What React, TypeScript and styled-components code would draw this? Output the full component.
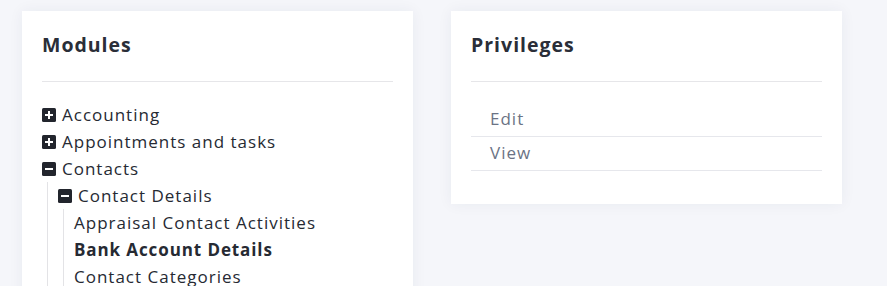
import React from "react";
import styled, { createGlobalStyle } from "styled-components";

const Global = createGlobalStyle`
  html, body { margin: 0; padding: 0; background: #f5f6fa; }
  body { font-family: "Open Sans", "DejaVu Sans", sans-serif; }
  * { box-sizing: border-box; }
`;

const Page = styled.div`
  display: flex;
  align-items: flex-start;
  gap: 38px;
  padding: 11px 22px 0 22px;
  height: 286px;
  overflow: hidden;
`;

const Card = styled.div<{ $fill?: boolean }>`
  width: 391px;
  background: #fff;
  box-shadow: 0 0 14px rgba(40, 50, 90, 0.06);
  padding: 20px 20px ${(p) => (p.$fill ? "0" : "33px")} 20px;
  ${(p) => (p.$fill ? "height: 400px;" : "")}
`;

const Title = styled.h3`
  margin: 0;
  font-size: 19.5px;
  font-weight: 700;
  letter-spacing: 1px;
  color: #2a2e38;
  line-height: 28px;
  padding-bottom: 22px;
  border-bottom: 1px solid #e6e6e9;
`;

const Tree = styled.ul`
  list-style: none;
  margin: 0;
  padding: 19px 0 0 0;
`;

const SubTree = styled.ul`
  list-style: none;
  margin: 0 0 0 5px;
  padding: 0 0 0 10px;
  border-left: 1px solid #e3e3e6;
`;

const Node = styled.li``;

const Label = styled.div<{ $bold?: boolean }>`
  display: flex;
  align-items: center;
  gap: 6px;
  height: 27px;
  font-size: 17px;
  letter-spacing: ${(p) => (p.$bold ? "0.9px" : "1px")};
  color: #262a33;
  font-weight: ${(p) => (p.$bold ? 700 : 400)};
  white-space: nowrap;
`;

const Toggle = styled.span`
  display: inline-flex;
  width: 14px;
  height: 14px;
  flex: none;
`;

const PrivList = styled.ul`
  list-style: none;
  margin: 0;
  padding: 21px 0 0 0;
`;

const PrivRow = styled.li`
  height: 34px;
  display: flex;
  align-items: center;
  padding: 0 0 3px 19px;
  font-size: 17px;
  letter-spacing: 1px;
  color: #6b7385;
  border-bottom: 1px solid #e6e7ec;
`;

const Box = ({ open }: { open: boolean }) => (
  <Toggle>
    <svg width="14" height="14" viewBox="0 0 14 14">
      <rect x="0" y="0" width="14" height="14" rx="1.5" fill="#22252d" />
      <rect x="3" y="6" width="8" height="2" fill="#fff" />
      {!open && <rect x="6" y="3" width="2" height="8" fill="#fff" />}
    </svg>
  </Toggle>
);

export default function App() {
  return (
    <>
      <Global />
      <Page>
        <Card $fill>
          <Title>Modules</Title>
          <Tree>
            <Node>
              <Label>
                <Box open={false} />
                Accounting
              </Label>
            </Node>
            <Node>
              <Label>
                <Box open={false} />
                Appointments and tasks
              </Label>
            </Node>
            <Node>
              <Label>
                <Box open />
                Contacts
              </Label>
              <SubTree>
                <Node>
                  <Label>
                    <Box open />
                    Contact Details
                  </Label>
                  <SubTree>
                    <Node>
                      <Label>Appraisal Contact Activities</Label>
                    </Node>
                    <Node>
                      <Label $bold>Bank Account Details</Label>
                    </Node>
                    <Node>
                      <Label>Contact Categories</Label>
                    </Node>
                  </SubTree>
                </Node>
              </SubTree>
            </Node>
          </Tree>
        </Card>
        <Card>
          <Title>Privileges</Title>
          <PrivList>
            <PrivRow>Edit</PrivRow>
            <PrivRow>View</PrivRow>
          </PrivList>
        </Card>
      </Page>
    </>
  );
}
